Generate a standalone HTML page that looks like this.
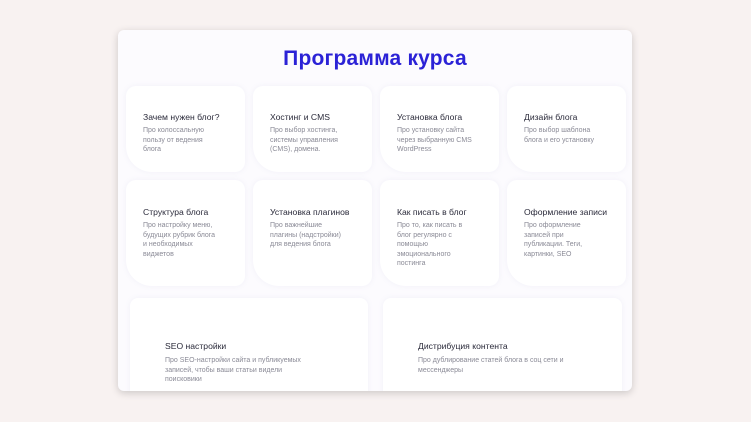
<!DOCTYPE html><html><head><meta charset="utf-8"><style>
body{margin:0;width:751px;height:422px;background:#f8f2f1;font-family:"Liberation Sans",sans-serif;position:relative;overflow:hidden}
.panel{position:absolute;left:118px;top:30px;width:514px;height:361px;background:#fcfbfe;border-radius:6px;box-shadow:0 2px 8px rgba(0,0,0,.18);overflow:hidden}
h1{position:absolute;top:17px;left:0;width:100%;text-align:center;margin:0;font-size:21px;font-weight:bold;color:#2b22d6;letter-spacing:.2px}
.c{position:absolute;background:#fff;border-radius:10px 10px 10px 26px;box-shadow:0 0 6px rgba(120,110,180,.08)}
.c b{position:absolute;left:17px;top:26px;font-size:8.6px;font-weight:normal;color:#2a2a3a;white-space:nowrap}
.c p{position:absolute;left:17px;top:40px;margin:0;font-size:7px;line-height:9.5px;color:#8a8a96;width:72px}
</style></head><body><div class="panel">
<h1>Программа курса</h1>
<div class="c" style="left:8px;top:56px;width:119px;height:86px"><b>Зачем нужен блог?</b><p>Про колоссальную пользу от ведения блога</p></div>
<div class="c" style="left:135px;top:56px;width:119px;height:86px"><b>Хостинг и CMS</b><p style="width:78px">Про выбор хостинга, системы управления (CMS), домена.</p></div>
<div class="c" style="left:262px;top:56px;width:119px;height:86px"><b>Установка блога</b><p style="width:80px">Про установку сайта через выбранную CMS WordPress</p></div>
<div class="c" style="left:389px;top:56px;width:119px;height:86px"><b>Дизайн блога</b><p style="width:78px">Про выбор шаблона блога и его установку</p></div>
<div class="c" style="left:8px;top:150px;width:119px;height:106px"><b style="top:27px">Структура блога</b><p style="top:41px;width:74px">Про настройку меню, будущих рубрик блога и необходимых виджетов</p></div>
<div class="c" style="left:135px;top:150px;width:119px;height:106px"><b style="top:27px">Установка плагинов</b><p style="top:41px">Про важнейшие плагины (надстройки) для ведения блога</p></div>
<div class="c" style="left:262px;top:150px;width:119px;height:106px"><b style="top:27px">Как писать в блог</b><p style="top:41px;width:68px">Про то, как писать в блог регулярно с помощью эмоционального постинга</p></div>
<div class="c" style="left:389px;top:150px;width:119px;height:106px"><b style="top:27px">Оформление записи</b><p style="top:41px">Про оформление записей при публикации. Теги, картинки, SEO</p></div>
<div class="c" style="left:12px;top:268px;width:238px;height:110px;border-radius:8px"><b style="left:35px;top:43px">SEO настройки</b><p style="left:35px;top:58px;width:150px">Про SEO-настройки сайта и публикуемых записей, чтобы ваши статьи видели поисковики</p></div>
<div class="c" style="left:265px;top:268px;width:239px;height:110px;border-radius:8px"><b style="left:35px;top:43px">Дистрибуция контента</b><p style="left:35px;top:58px;width:160px">Про дублирование статей блога в соц сети и мессенджеры</p></div>
</div></body></html>
